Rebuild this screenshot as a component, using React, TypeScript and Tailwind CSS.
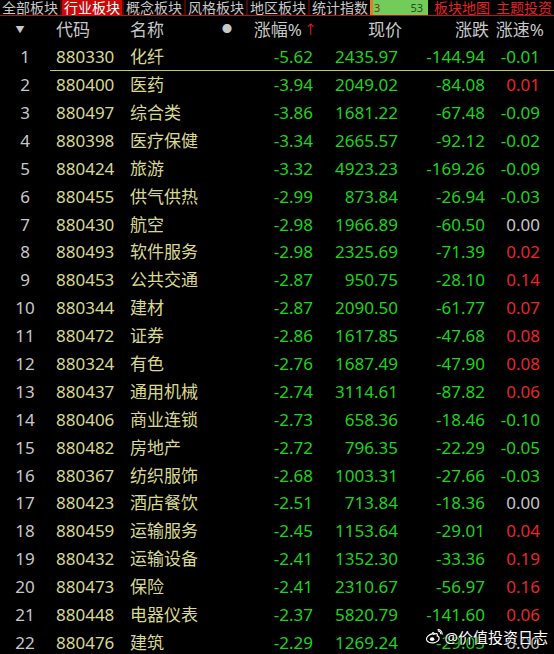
import React from "react";

interface Row {
    code: string,
    name: string,
    pct: string,
    price: string,
    change: string,
    speed: string
}

const rows: Row[] = [
    { code: "880330", name: "化纤", pct: "-5.62", price: "2435.97", change: "-144.94", speed: "-0.01" },
    { code: "880400", name: "医药", pct: "-3.94", price: "2049.02", change: "-84.08", speed: "0.01" },
    { code: "880497", name: "综合类", pct: "-3.86", price: "1681.22", change: "-67.48", speed: "-0.09" },
    { code: "880398", name: "医疗保健", pct: "-3.34", price: "2665.57", change: "-92.12", speed: "-0.02" },
    { code: "880424", name: "旅游", pct: "-3.32", price: "4923.23", change: "-169.26", speed: "-0.09" },
    { code: "880455", name: "供气供热", pct: "-2.99", price: "873.84", change: "-26.94", speed: "-0.03" },
    { code: "880430", name: "航空", pct: "-2.98", price: "1966.89", change: "-60.50", speed: "0.00" },
    { code: "880493", name: "软件服务", pct: "-2.98", price: "2325.69", change: "-71.39", speed: "0.02" },
    { code: "880453", name: "公共交通", pct: "-2.87", price: "950.75", change: "-28.10", speed: "0.14" },
    { code: "880344", name: "建材", pct: "-2.87", price: "2090.50", change: "-61.77", speed: "0.07" },
    { code: "880472", name: "证券", pct: "-2.86", price: "1617.85", change: "-47.68", speed: "0.08" },
    { code: "880324", name: "有色", pct: "-2.76", price: "1687.49", change: "-47.90", speed: "0.08" },
    { code: "880437", name: "通用机械", pct: "-2.74", price: "3114.61", change: "-87.82", speed: "0.06" },
    { code: "880406", name: "商业连锁", pct: "-2.73", price: "658.36", change: "-18.46", speed: "-0.10" },
    { code: "880482", name: "房地产", pct: "-2.72", price: "796.35", change: "-22.29", speed: "-0.05" },
    { code: "880367", name: "纺织服饰", pct: "-2.68", price: "1003.31", change: "-27.66", speed: "-0.03" },
    { code: "880423", name: "酒店餐饮", pct: "-2.51", price: "713.84", change: "-18.36", speed: "0.00" },
    { code: "880459", name: "运输服务", pct: "-2.45", price: "1153.64", change: "-29.01", speed: "0.04" },
    { code: "880432", name: "运输设备", pct: "-2.41", price: "1352.30", change: "-33.36", speed: "0.19" },
    { code: "880473", name: "保险", pct: "-2.41", price: "2310.67", change: "-56.97", speed: "0.16" },
    { code: "880448", name: "电器仪表", pct: "-2.37", price: "5820.79", change: "-141.60", speed: "0.06" },
    { code: "880476", name: "建筑", pct: "-2.29", price: "1269.24", change: "-29.05", speed: "0.00" },
];

const tabs = ["全部板块", "行业板块", "概念板块", "风格板块", "地区板块", "统计指数"];

// red for up, green for down, grey for flat
const colorOf = (v: string): string => {
    if (Number(v) > 0) return "text-[#e8262a]";
    if (Number(v) < 0) return "text-[#1ed31e]";
    return "text-[#c8c8c8]";
}

const WeiboLogo = () => (
    <svg width="18" height="15" viewBox="0 0 24 20">
        <path d="M10 6.5c-5 .8-8.5 4.5-8 7.5.5 3.3 5 5.2 9.6 4.4 4.8-.8 7.8-3.9 7.2-6.8-.4-1.7-2-2.3-2.6-2.4.6-1.5.4-2.7-.8-3-1.2-.3-3.4.6-3.4.6s.4-1.4-.6-1.8C10.4 4.6 9 5.4 10 6.5z" fill="none" stroke="#fff" strokeWidth="1.6" />
        <ellipse cx="9.5" cy="13.5" rx="3" ry="2.4" fill="#fff" />
        <path d="M17 2.5a4 4 0 0 1 4 4.5M16.8 0.6a6 6 0 0 1 6 7" fill="none" stroke="#fff" strokeWidth="1.4" />
    </svg>
);

const App: React.FC = (): React.ReactElement => {
    return (
        <div className="w-[554px] h-[654px] bg-black overflow-hidden relative font-['Noto_Sans','Noto_Sans_CJK_SC',sans-serif]">
            {/* tab strip */}
            <div className="flex h-[16px] border-b border-[#c01010] text-[14px] leading-[15px] text-[#c8c8c8]">
                {tabs.map((tab, idx) => (
                    <div key={tab}
                        className={`w-[62px] h-[15px] border-r-2 border-[#4a0808] flex justify-center whitespace-nowrap ${idx === 1 ? "bg-[#c80a0a] text-white" : ""}`}>
                        {tab}
                    </div>
                ))}
                <div className="ml-[-2px] flex w-[58px] h-[15px] text-[11px] leading-[15px] text-[#205020]">
                    <div className="w-[3px] bg-[#e08020]"></div>
                    <div className="flex flex-1 justify-between bg-[#72cc5a] pl-[1px] pr-[5px]">
                        <span className="text-[#6a3a10]">3</span>
                        <span>53</span>
                    </div>
                </div>
                <div className="ml-[6px] text-[#e42424] whitespace-nowrap">板块地图</div>
                <div className="ml-[6px] text-[#e42424] whitespace-nowrap">主题投资</div>
            </div>

            {/* column header */}
            <div className="flex items-center h-[27px] text-[17px] text-[#c8c8c8]">
                <div className="w-[50px] flex justify-center pr-[10px]">
                    <span className="text-[9px] leading-none">▼</span>
                </div>
                <div className="w-[80px] pl-[6px]">代码</div>
                <div className="w-[92px]">名称</div>
                <div className="w-[32px] text-[10px]">●</div>
                <div className="w-[63px] flex justify-end items-center whitespace-nowrap">
                    涨幅%<span className="text-[#e42424] text-[13px] ml-[2px]">↑</span>
                </div>
                <div className="w-[85px] text-right">现价</div>
                <div className="w-[87px] text-right">涨跌</div>
                <div className="w-[55px] text-right whitespace-nowrap">涨速%</div>
            </div>

            {/* quote rows */}
            {rows.map((row, idx) => (
                <div key={row.code} className="flex items-center h-[27.9px] text-[17px] whitespace-nowrap">
                    <div className="w-[50px] text-center text-[#c8c8c8]">{idx + 1}</div>
                    <div className={`flex flex-1 items-center h-full ${idx === 0 ? "border-b border-[#c8c860]" : ""}`}>
                        <div className="w-[80px] pl-[6px] text-[#d8d890]">{row.code}</div>
                        <div className="w-[120px] text-[#d8d890]">{row.name}</div>
                        <div className={`w-[63px] text-right ${colorOf(row.pct)}`}>{row.pct}</div>
                        <div className={`w-[85px] text-right ${colorOf(row.pct)}`}>{row.price}</div>
                        <div className={`w-[87px] text-right ${colorOf(row.change)}`}>{row.change}</div>
                        <div className={`w-[55px] text-right ${colorOf(row.speed)}`}>{row.speed}</div>
                    </div>
                </div>
            ))}

            {/* watermark */}
            <div className="absolute right-[6px] bottom-[6px] flex items-center gap-[2px] text-white text-[15px] [text-shadow:0_0_2px_#000,0_0_2px_#000]">
                <WeiboLogo />
                <span>@价值投资日志</span>
            </div>
        </div>
    );
}

export default App;
